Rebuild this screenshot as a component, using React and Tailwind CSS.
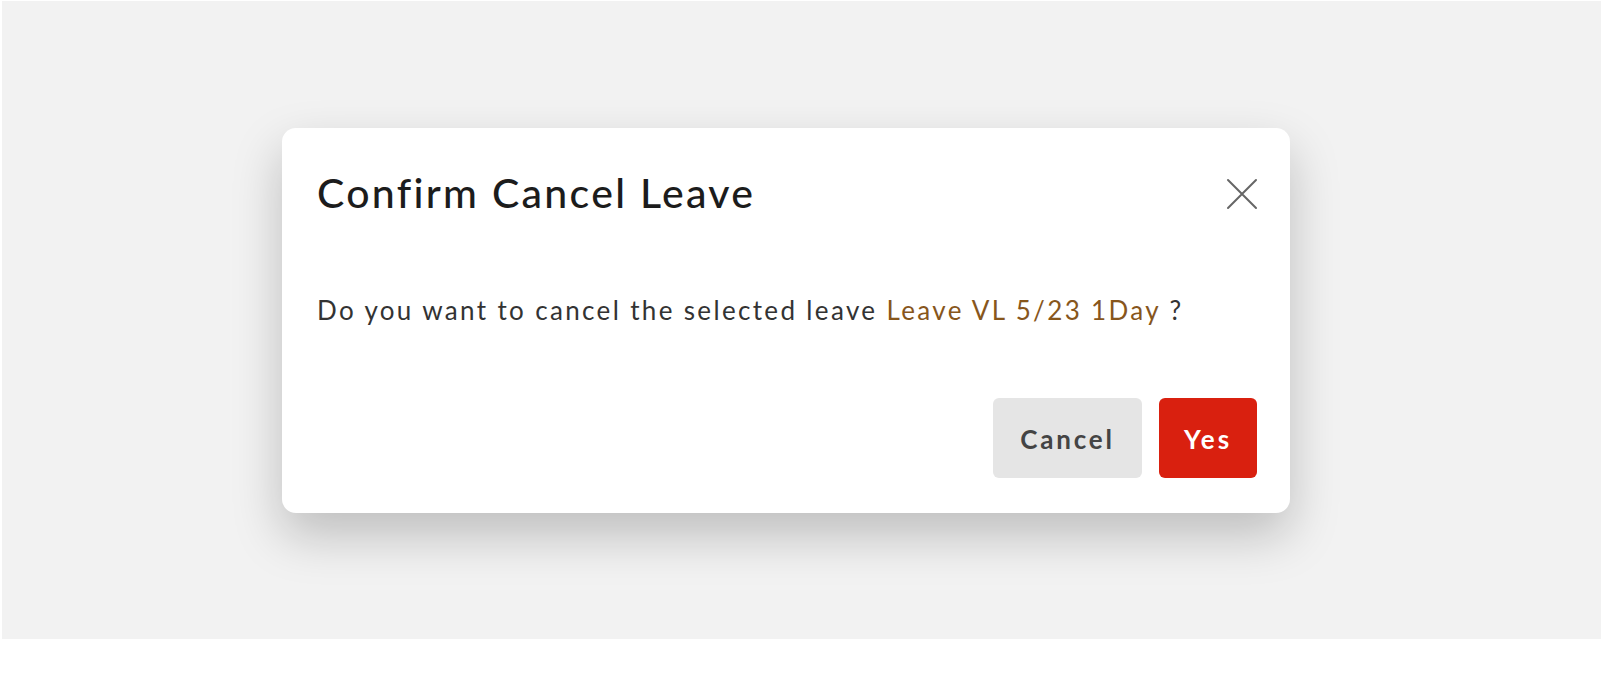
export default function App() {
  return (
    <div className="h-[691px] w-full bg-white pl-[2px] pt-px" style={{ fontFamily: "Lato, 'Noto Sans', sans-serif" }}>
      <div className="h-[638px] w-full bg-[#f2f2f2] pl-[280px] pt-[127px]">
        <div className="w-[1008px] h-[385px] bg-white rounded-[14px] shadow-[0_22px_50px_rgba(0,0,0,0.22)] px-[35px] pt-[41px]">
          <div className="flex items-start justify-between">
            <h2 className="text-[41px] leading-[48px] font-medium tracking-[2.3px] text-[#1c1c1c]">Confirm Cancel Leave</h2>
            <button className="mt-[9px] mr-[-3px] text-[#666]">
              <svg width="32" height="32" viewBox="0 0 32 32" fill="none" stroke="currentColor" strokeWidth="2" strokeLinecap="round">
                <path d="M2 2L30 30M30 2L2 30" />
              </svg>
            </button>
          </div>

          <p className="mt-[78px] text-[26px] leading-[31px] tracking-[2.35px] text-[#333]">
            Do you want to cancel the selected leave{" "}
            <span className="text-[#87561c]">Leave VL 5/23 1Day</span> ?
          </p>

          <div className="mt-[72px] flex justify-end gap-[17px] mr-[-2px]">
            <button className="w-[149px] h-[80px] pt-[3px] rounded-[6px] bg-[#e5e5e5] text-[26px] font-bold tracking-[2.8px] text-[#444]">
              Cancel
            </button>
            <button className="w-[98px] h-[80px] pt-[3px] rounded-[6px] bg-[#d9200f] text-[26px] font-bold tracking-[3px] text-white">
              Yes
            </button>
          </div>
        </div>
      </div>
    </div>
  );
}
